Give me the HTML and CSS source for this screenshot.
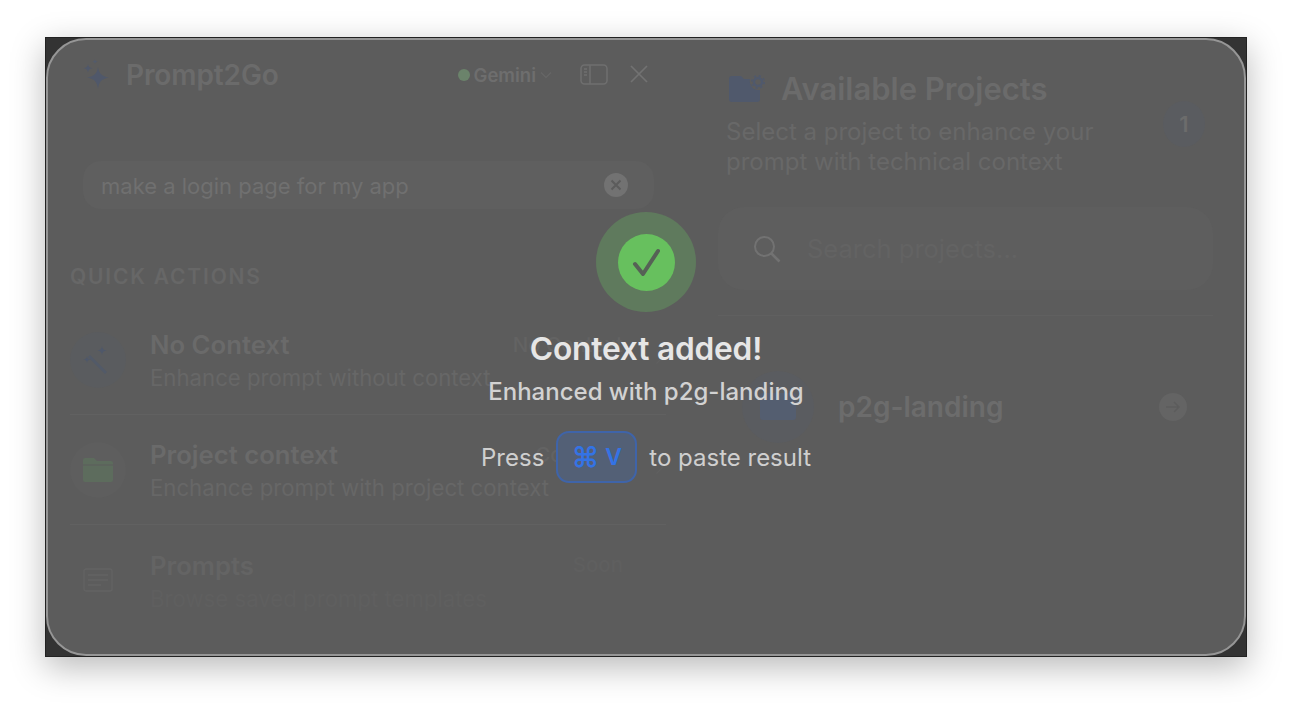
FILE: index.html
```html
<!DOCTYPE html>
<html lang="en">
<head>
<meta charset="utf-8">
<title>Prompt2Go</title>
<link rel="stylesheet" href="styles.css">
</head>
<body>
<div class="window">
  <div class="panel">
    <section class="left">
      <header class="top">
        <svg class="spark" width="30" height="32" viewBox="0 0 30 32"><path fill="#50586a" d="M15 9c1 6.500 3.500 9 11 10.500-7.500 1.500-10 4-11 11.500-1-7.500-3.500-10-11-11.500 7.500-1.500 10-4 11-10.500z"/><path fill="#50586a" d="M5 6c.5 2.800 1.500 3.800 4.500 4.300C6.500 10.800 5.500 11.800 5 14.600c-.5-2.800-1.500-3.800-4.500-4.300C3.500 9.800 4.500 8.800 5 6z"/><path fill="#535b6b" d="M12 1c.3 1.500.8 2 2.500 2.500C12.800 4 12.300 4.500 12 6c-.3-1.500-.8-2-2.500-2.500C11.200 3 11.700 2.500 12 1z"/></svg>
        <h1 class="brand">Prompt2Go</h1>
        <div class="model"><span class="dot"></span><span>Gemini</span>
          <svg width="12" height="8" viewBox="0 0 12 8"><path d="M1 1.500l5 5 5-5" fill="none" stroke="#666" stroke-width="1.300"/></svg>
        </div>
        <svg class="side" width="28" height="21" viewBox="0 0 28 21"><rect x="1" y="1" width="26" height="19" rx="3.500" fill="none" stroke="#6f6f6f" stroke-width="1.500"/><path d="M10 1v19" stroke="#6f6f6f" stroke-width="1.500"/><path d="M4 5h3M4 8h3M4 11h3" stroke="#6f6f6f" stroke-width="1.300"/></svg>
        <svg class="close" width="18" height="18" viewBox="0 0 18 18"><path d="M1 1l16 16M17 1L1 17" stroke="#727272" stroke-width="1.700"/></svg>
      </header>
      <div class="input">
        <span class="input-text">make a login page for my app</span>
        <span class="clear"><svg width="12" height="12" viewBox="0 0 12 12"><path d="M1.500 1.500l9 9M10.500 1.500l-9 9" stroke="#5c5c5c" stroke-width="2"/></svg></span>
      </div>
      <h2 class="label">QUICK ACTIONS</h2>
      <div class="row">
        <span class="ico ico-a"><svg width="32" height="30" viewBox="0 0 32 30"><path d="M7 11l17 17" stroke="#525a68" stroke-width="3"/><path fill="#4f586a" d="M20 1c.5 3 1.500 4 4.500 4.500-3 .5-4 1.500-4.500 4.500-.5-3-1.500-4-4.500-4.500 3-.5 4-1.500 4.500-4.500zM5 11c.4 2.200 1 3 3.500 3.500-2.500.5-3.100 1.300-3.500 3.500-.4-2.200-1-3-3.500-3.500 2.500-.5 3.100-1.300 3.500-3.500z"/></svg></span>
        <div class="copy"><div class="name">No Context</div><div class="desc">Enhance prompt without context</div></div>
        <span class="tag">No Context</span>
        <svg class="chev" width="10" height="16" viewBox="0 0 10 16"><path d="M1.500 1.500L8 8l-6.500 6.500" fill="none" stroke="#606060" stroke-width="1.300"/></svg>
      </div>
      <div class="row">
        <span class="ico ico-b"><svg width="30" height="24" viewBox="0 0 30 24"><path fill="#5d6c5d" d="M2 0h9l3 3h14a2 2 0 0 1 2 2v17a2 2 0 0 1-2 2H2a2 2 0 0 1-2-2V2a2 2 0 0 1 2-2z"/><path d="M0 7h30" stroke="#5c5c5c"/></svg></span>
        <div class="copy"><div class="name">Project context</div><div class="desc">Enchance prompt with project context</div></div>
        <span class="tag">Contexts</span>
        <svg class="chev" width="10" height="16" viewBox="0 0 10 16"><path d="M1.500 1.500L8 8l-6.500 6.500" fill="none" stroke="#606060" stroke-width="1.300"/></svg>
      </div>
      <div class="row last">
        <span class="ico ico-c"><svg width="30" height="24" viewBox="0 0 30 24"><rect x="1" y="1" width="28" height="22" rx="2" fill="none" stroke="#636363" stroke-width="1.300"/><path d="M5 7h20M5 12h20M5 17h13" stroke="#636363" stroke-width="1.300"/></svg></span>
        <div class="copy"><div class="name dim">Prompts</div><div class="desc dimmer">Browse saved prompt templates</div></div>
        <span class="tag tag-soon">Soon</span>
      </div>
    </section>
    <section class="right">
      <div class="head">
        <div class="head-text">
          <h2 class="title">
            <svg width="38" height="27" viewBox="0 0 38 27"><path fill="#50596c" d="M4 1h9l3 3h6a9 9 0 0 0 10 11v9a3 3 0 0 1-3 3H4a3 3 0 0 1-3-3V4a3 3 0 0 1 3-3z"/><circle cx="30" cy="7" r="4" fill="none" stroke="#50596c" stroke-width="2.500"/><circle cx="30" cy="7" r="6.200" fill="none" stroke="#50596c" stroke-width="1.600" stroke-dasharray="2.200 2.670"/></svg>
            <span>Available Projects</span>
          </h2>
          <p class="sub">Select a project to enhance your prompt with technical context</p>
        </div>
        <span class="count">1</span>
      </div>
      <div class="search">
        <svg width="28" height="28" viewBox="0 0 28 28"><circle cx="11.500" cy="11.500" r="9.500" fill="none" stroke="#727272" stroke-width="2"/><path d="M18.500 18.500l8 8" stroke="#727272" stroke-width="2.500"/></svg>
        <span class="ph">Search projects...</span>
      </div>
      <div class="project">
        <span class="p-ico"><span class="p-square"></span></span>
        <span class="p-name">p2g-landing</span>
        <span class="go"><svg width="16" height="14" viewBox="0 0 16 14"><path d="M1 7h13M9 2l5 5-5 5" fill="none" stroke="#5c5c5c" stroke-width="1.500"/></svg></span>
      </div>
    </section>
    <div class="overlay">
      <div class="ring"><span class="disc"><svg width="28" height="30" viewBox="0 0 28 30"><path d="M3 17l8 10L26 4" fill="none" stroke="#566156" stroke-width="4" stroke-linecap="round" stroke-linejoin="round"/></svg></span></div>
      <div class="done">Context added!</div>
      <div class="with">Enhanced with p2g-landing</div>
      <div class="press"><span>Press</span><kbd class="key"><span class="cmd">⌘</span>V</kbd><span>to paste result</span></div>
    </div>
  </div>
</div>
</body>
</html>
```
FILE: styles.css
```css
* { box-sizing: border-box; }
html, body { margin: 0; height: 710px; overflow: hidden; background: #fff; }
body { font-family: Inter, "Liberation Sans", sans-serif; padding: 37px 45px 0; }
h1, h2, p { margin: 0; }

.window {
  width: 1202px; height: 620px;
  background: #333;
  border: 1px solid #222;
  box-shadow: 0 10px 32px rgba(0,0,0,.28);
}
.panel {
  position: relative;
  display: flex;
  height: 618px;
  background: #5c5c5c;
  border: 2px solid #969696;
  border-radius: 40px;
  overflow: hidden;
  color: #686868;
}

.left { width: 643px; flex: none; padding: 0 25px 0 22px; }
.top { display: flex; align-items: center; height: 68px; padding-left: 13px; }
.spark { margin-right: 13px; }
.brand { font-size: 28px; line-height: 36px; padding-top: 2px; font-weight: 600; letter-spacing: -.1px; color: #6b6b6b; }
.model { display: flex; align-items: center; height: 26px; padding-top: 2px; margin-left: auto; font-size: 18.500px; font-weight: 600; color: #6e6e6e; gap: 4px; }
.dot { width: 12px; height: 12px; border-radius: 50%; background: #6b836b; }
.side { margin-left: 28px; }
.close { margin-left: 22px; margin-right: 18px; }

.input {
  display: flex; align-items: center; justify-content: space-between;
  height: 48px; margin: 53px 12px 0 13px; padding: 0 26px 0 18px;
  background: #5f5f5f; border-radius: 18px;
}
.input-text { font-size: 22px; line-height: 30px; padding-top: 2px; color: #707070; }
.clear { display: flex; align-items: center; justify-content: center; width: 24px; height: 24px; border-radius: 50%; background: #727272; }

.label { margin-top: 55px; height: 26px; font-size: 21px; line-height: 26px; font-weight: 600; letter-spacing: 1.800px; color: #676767; }

.row { position: relative; display: flex; align-items: center; height: 110px; border-bottom: 1px solid #616161; }
.label + .row { margin-top: 15px; }
.row.last { border-bottom: 0; }
.ico { display: flex; align-items: center; justify-content: center; width: 56px; height: 56px; border-radius: 50%; margin-right: 24px; }
.ico-a { background: #5a5c5f; }
.ico-b { background: #5e5e5e; }
.copy { padding-top: 5px; }
.name { font-size: 25.700px; font-weight: 600; line-height: 32px; color: #6a6a6a; }
.desc { font-size: 22.200px; line-height: 34px; color: #676767; }
.dim { color: #646464; }
.dimmer { color: #5f5f5f; }
.tag { position: absolute; top: 27px; right: 43px; font-size: 20.500px; font-weight: 500; white-space: nowrap; color: #636363; }
.tag-soon { color: #5f5f5f; }
.chev { position: absolute; left: 585px; top: 44px; }

.right { flex: 1; padding: 27px 31px 0 27px; }
.head { display: flex; align-items: flex-start; justify-content: space-between; height: 140px; }
.head-text { width: 420px; }
.title { display: flex; align-items: center; gap: 15px; padding-left: 10px; height: 42px; font-size: 31px; font-weight: 600; color: #6b6b6b; white-space: nowrap; }
.sub { padding-left: 8px; margin-top: 8px; font-size: 24px; line-height: 30px; color: #686868; }
.count { display: flex; align-items: center; justify-content: center; width: 42px; height: 46px; margin: 34px 8px 0 0; border-radius: 50%; background: #5a5c60; font-size: 22px; font-weight: 600; color: #6c6c6c; }
.search { display: flex; align-items: center; gap: 26px; height: 83px; padding-left: 35px; background: #5e5e5e; border-radius: 26px; }
.ph { font-size: 25.500px; color: #636363; }
.project { display: flex; align-items: center; height: 182px; padding-left: 24px; border-top: 1px solid #606060; margin-top: 25px; }
.p-ico { display: flex; align-items: center; justify-content: center; width: 72px; height: 72px; border-radius: 50%; background: #5a5c60; margin-right: 24px; }
.p-square { width: 36px; height: 27px; border-radius: 3px; background: #545e70; }
.p-name { font-size: 28px; font-weight: 600; color: #6c6c6c; }
.go { display: flex; align-items: center; justify-content: center; width: 28px; height: 28px; border-radius: 50%; background: #646464; margin-left: auto; margin-right: 26px; }

.overlay {
  position: absolute; inset: 0;
  display: flex; flex-direction: column; align-items: center;
  padding-top: 172px;
}
.ring { display: flex; align-items: center; justify-content: center; width: 100px; height: 100px; border-radius: 50%; background: #5f7a5d; }
.disc { display: flex; align-items: center; justify-content: center; width: 57px; height: 57px; border-radius: 50%; background: #67c05e; }
.done { margin-top: 16px; font-size: 31.700px; line-height: 42px; font-weight: 600; color: #e6e6e6; letter-spacing: -.2px; }
.with { margin-top: 7px; font-size: 24px; line-height: 30px; font-weight: 500; color: #d2d2d2; }
.press { display: flex; align-items: center; gap: 12px; margin-top: 24px; font-size: 24px; color: #cfcfcf; }
.key {
  display: flex; align-items: center; justify-content: center; gap: 6px;
  width: 81px; height: 52px;
  background: #536076; border: 2px solid #3f64a9; border-radius: 13px;
  font-family: Inter, "DejaVu Sans", sans-serif; font-size: 23px; font-weight: 600; color: #3373e6;
}
.cmd { font-size: 28px; line-height: 1; }
```
